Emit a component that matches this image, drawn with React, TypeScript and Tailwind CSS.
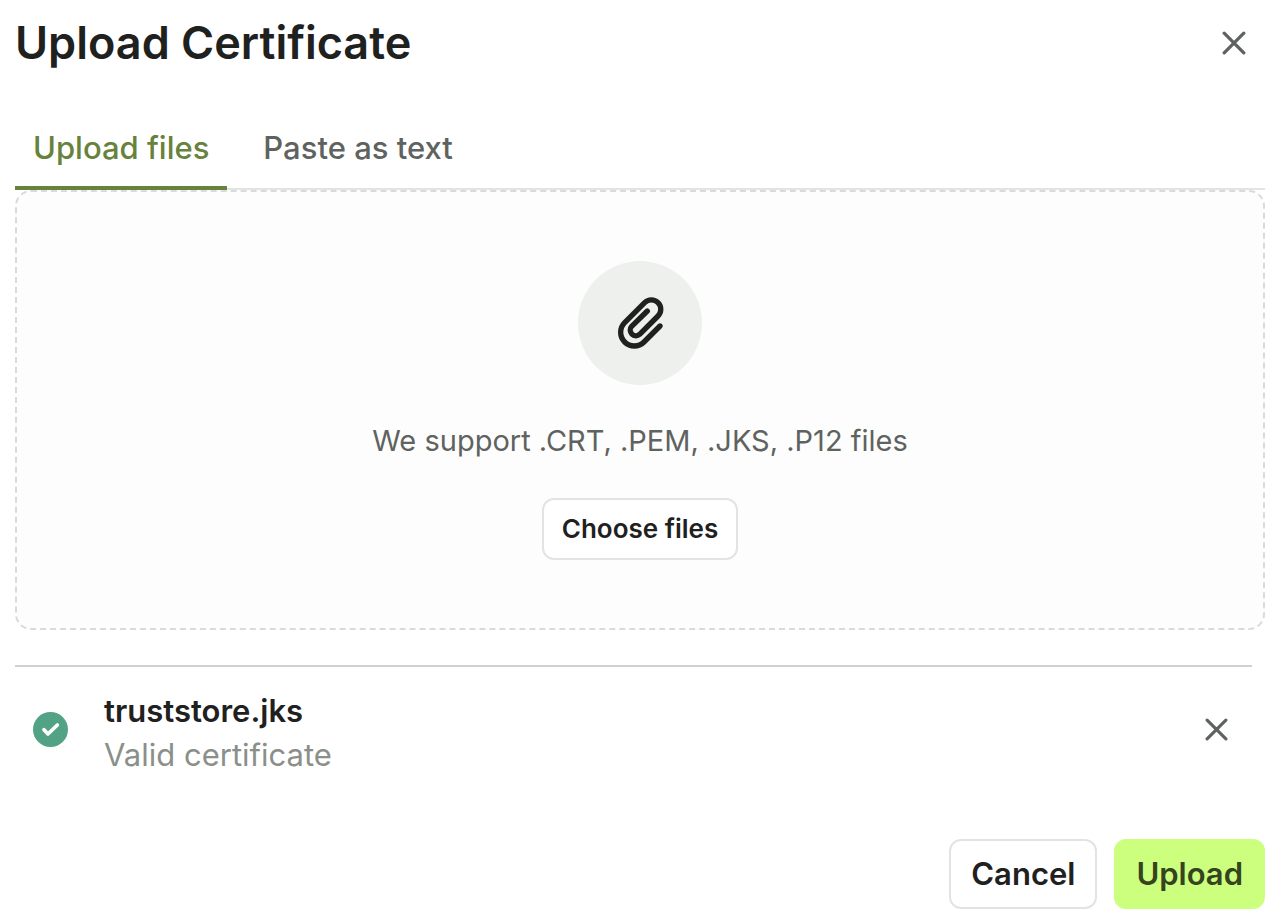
import { useState } from 'react';

function CloseIcon({ className }: { className: string }) {
  return (
    <svg viewBox="0 0 24 24" fill="none" stroke="currentColor" strokeWidth="3.3" strokeLinecap="round" className={className} aria-hidden="true">
      <path d="M2.2 2.2 21.8 21.8M21.8 2.2 2.2 21.8" />
    </svg>
  );
}

function PaperclipIcon() {
  return (
    <svg viewBox="159 167 162 162" fill="none" stroke="currentColor" strokeWidth="16" strokeLinecap="round" strokeLinejoin="round" className="size-[54px]" aria-hidden="true">
      <path d="M262 212 215 258A17 17 0 0 0 239 282L294 227A28 28 0 0 0 254 187L194 247A41 41 0 0 0 252 305L300 257" />
    </svg>
  );
}

function ValidIcon() {
  return (
    <svg viewBox="0 0 105 105" className="size-[35px] shrink-0" aria-hidden="true">
      <circle cx="52.5" cy="52.5" r="52.5" fill="#52a385" />
      <path d="M33 53 45 66 73 39" fill="none" stroke="#fff" strokeWidth="11" strokeLinecap="round" strokeLinejoin="round" />
    </svg>
  );
}

const tabs = ['Upload files', 'Paste as text'];

export default function App() {
  const [active, setActive] = useState(0);
  return (
    <main className="bg-white pt-4 pr-[21px] pb-4 pl-[15px] font-['Inter','Liberation_Sans',sans-serif] text-[#1f211f]">
      <header className="flex items-center justify-between pr-[19px]">
        <h1 className="text-[45px] leading-[54px] font-semibold">Upload Certificate</h1>
        <button type="button" aria-label="Close" className="text-[#5f635f]">
          <CloseIcon className="size-6" />
        </button>
      </header>

      <div role="tablist" className="mt-[38px] flex gap-[18px] border-b-2 border-[#e2e4e2]">
        {tabs.map((tab, i) => (
          <button
            key={tab}
            type="button"
            role="tab"
            aria-selected={active === i}
            onClick={() => setActive(i)}
            className={
              active === i
                ? '-mb-[2px] border-b-4 border-[#66823c] px-[18px] pt-5 pb-[18px] text-[31px] leading-10 font-medium text-[#66823c]'
                : '-mb-[2px] border-b-4 border-transparent px-[18px] pt-5 pb-[18px] text-[31px] leading-10 font-medium text-[#5f635f]'
            }
          >
            {tab}
          </button>
        ))}
      </div>

      <section className="flex flex-col items-center rounded-2xl border-2 border-dashed border-[#d9dad9] bg-[#fdfdfd] pt-[69px] pb-[68px]">
        <div className="flex size-[124px] items-center justify-center rounded-full bg-[#eef0ee]">
          <PaperclipIcon />
        </div>
        <p className="mt-9 text-[29px] leading-10 text-[#5f635f]">We support .CRT, .PEM, .JKS, .P12 files</p>
        <button type="button" className="mt-[37px] rounded-xl border-2 border-[#e2e3e2] bg-white px-[18px] py-3 text-[26px] leading-[34px] font-semibold">
          Choose files
        </button>
      </section>

      <ul className="mt-[35px] mr-[13px] border-t-2 border-[#cfd0cf]">
        <li className="flex items-center pr-6 pl-[18px]">
          <ValidIcon />
          <div className="ml-9 flex-1 pt-[22px] pb-[14px]">
            <p className="text-[31px] leading-[44px] font-semibold">truststore.jks</p>
            <p className="text-[31px] leading-[44px] text-[#8b8f8a]">Valid certificate</p>
          </div>
          <button type="button" aria-label="Remove truststore.jks" className="text-[#5f635f]">
            <CloseIcon className="size-[23px]" />
          </button>
        </li>
      </ul>

      <footer className="mt-12 flex justify-end gap-[17px]">
        <button type="button" className="rounded-xl border-2 border-[#e2e3e2] bg-white px-5 py-[14px] text-[31px] leading-[38px] font-semibold">
          Cancel
        </button>
        <button type="button" className="rounded-xl border-2 border-[#cbff7d] bg-[#cbff7d] px-5 py-[14px] text-[31px] leading-[38px] font-semibold text-[#36431f]">
          Upload
        </button>
      </footer>
    </main>
  );
}
